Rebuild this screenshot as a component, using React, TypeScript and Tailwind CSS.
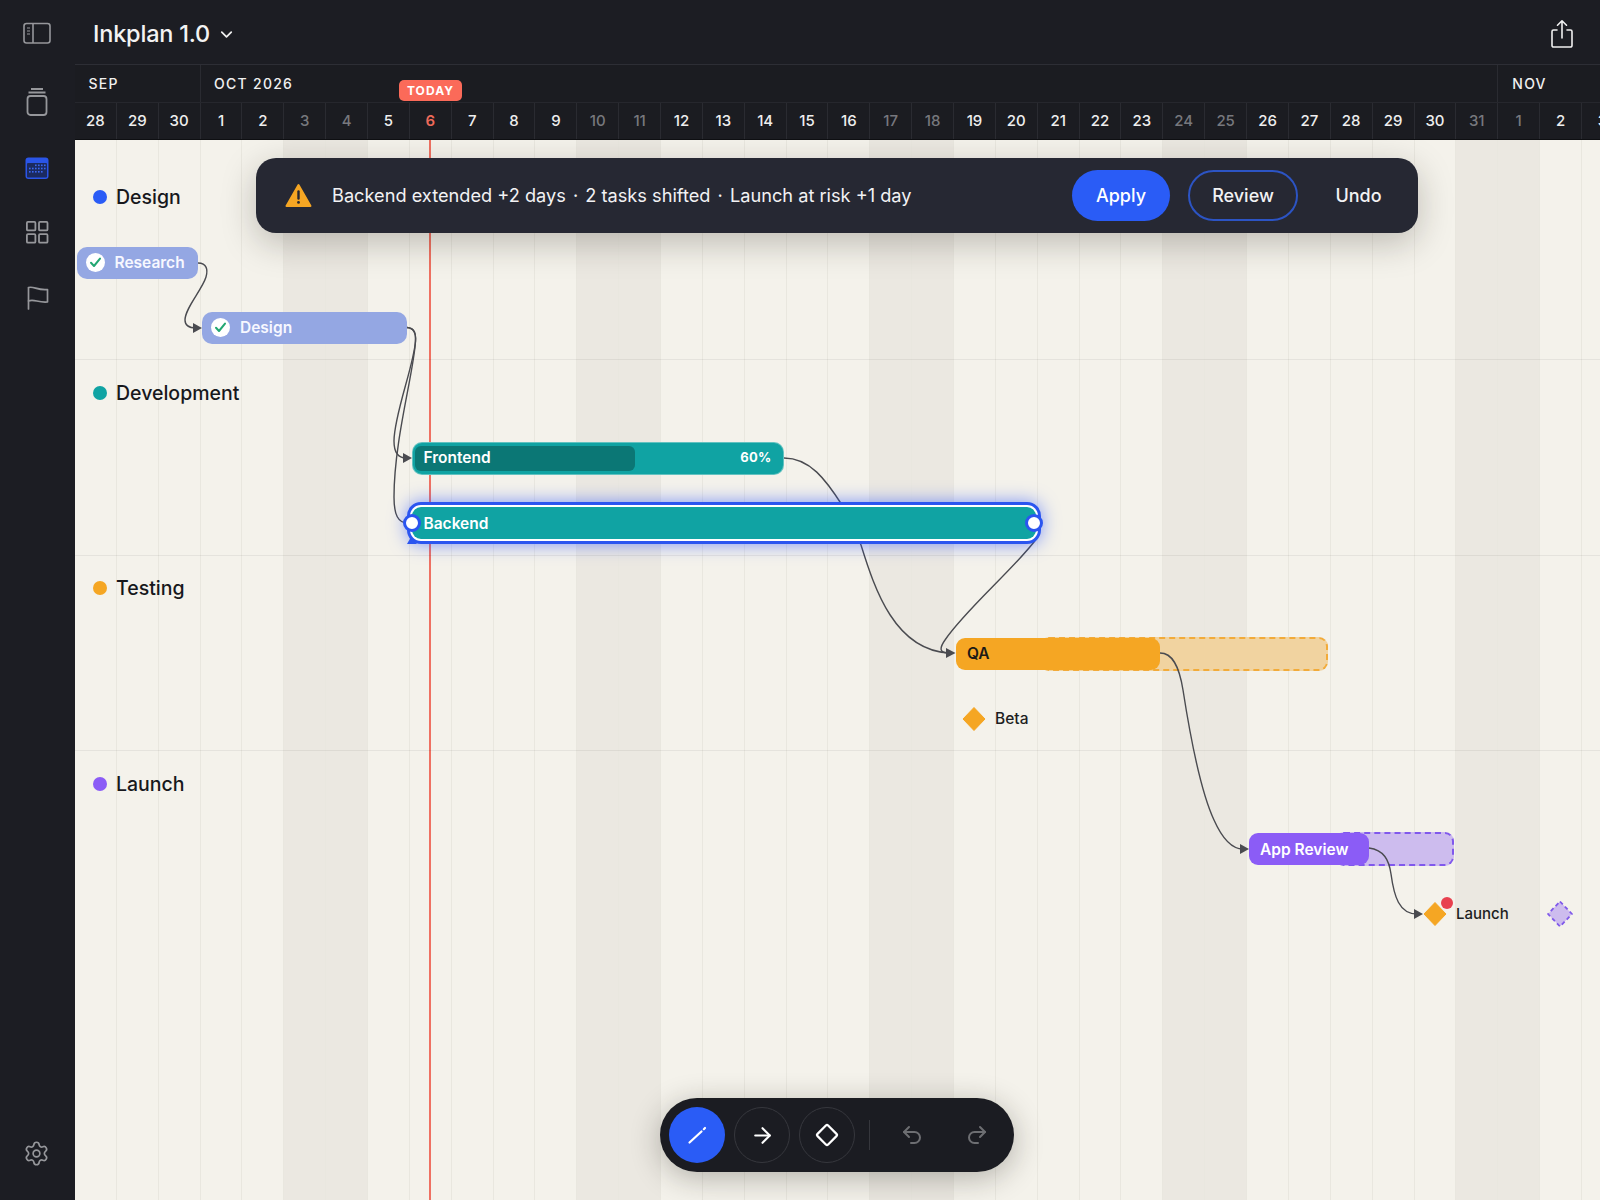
import React from "react";
import { Settings, ArrowRight, Undo2, Redo2, ChevronDown } from "lucide-react";

type Day = { n: number; kind: "work" | "off" | "today" };
const off = new Set(["o3","o4","o10","o11","o17","o18","o24","o25","o31","n1"]);
const days: (Day & { key: string })[] = [];
[28,29,30].forEach((n) => days.push({ n, kind: "work", key: "s" + n }));
for (let n = 1; n <= 31; n++) days.push({ n, kind: n === 6 ? "today" : off.has("o" + n) ? "off" : "work", key: "o" + n });
[1,2,3].forEach((n) => days.push({ n, kind: off.has("n" + n) ? "off" : "work", key: "n" + n }));

function Check() {
  return (
    <span className="w-[19px] h-[19px] rounded-full bg-white flex items-center justify-center shrink-0">
      <svg width="13" height="13" viewBox="0 0 13 13" fill="none"><path d="M2 6.8 L5 10 L11 2.6" stroke="#22a772" strokeWidth="2" strokeLinecap="round" strokeLinejoin="round" /></svg>
    </span>
  );
}

function Lane({ color, name, first, children }: { color: string; name: string; first?: boolean; children?: React.ReactNode }) {
  return (
    <div className={first ? "h-[220px] pt-[24.8px] border-b border-black/[0.06]" : "h-[195.6px] pt-[0.3px] border-b border-black/[0.06]"}>
      <div className="h-[65.2px] flex items-center pl-[18px] gap-[9px]">
        <span className="w-[14px] h-[14px] rounded-full" style={{ backgroundColor: color }} />
        <span className="text-[19.5px] leading-none font-medium text-[#17181c] pt-[1px]">{name}</span>
      </div>
      {children}
    </div>
  );
}

function Row({ children }: { children?: React.ReactNode }) {
  return <div className="h-[65.2px] flex items-center relative">{children}</div>;
}

export default function App() {
  return (
    <div className="w-[1600px] h-[1200px] flex overflow-hidden bg-[#1c1d23] font-['Inter',sans-serif]">
      <aside className="w-[75px] shrink-0 flex flex-col items-center pr-[1.5px] bg-[#1c1d23] relative z-10">
        <svg className="mt-[21px]" width="30" height="24" viewBox="0 0 30 24" fill="none" stroke="#96979b" strokeWidth="1.6">
          <rect x="2" y="2.5" width="26" height="19.5" rx="2.5" />
          <path d="M11 2.5V22" />
          <path d="M5 7H8M5 10H8M5 13H8" strokeWidth="1.2" />
        </svg>
        <svg className="mt-[42px]" width="24" height="30" viewBox="0 0 24 30" fill="none" stroke="#96979b" strokeWidth="1.8">
          <path d="M6 2H18M3.5 5.5H20.5" />
          <rect x="2.5" y="9" width="19" height="19" rx="3" />
        </svg>
        <svg className="mt-[40px]" width="24" height="22" viewBox="0 0 24 22">
          <rect x="0.5" y="0.5" width="23" height="21.5" rx="3" fill="#2a55e8" />
          <rect x="2" y="6" width="20" height="14.5" rx="1" fill="#1b2a60" />
          <g fill="#3a67f0">
            <rect x="10" y="7.5" width="1.6" height="1.6" /><rect x="13" y="7.5" width="1.6" height="1.6" /><rect x="16" y="7.5" width="1.6" height="1.6" /><rect x="19" y="7.5" width="1.6" height="1.6" />
            <rect x="4" y="10.7" width="1.6" height="1.6" /><rect x="7" y="10.7" width="1.6" height="1.6" /><rect x="10" y="10.7" width="1.6" height="1.6" /><rect x="13" y="10.7" width="1.6" height="1.6" /><rect x="16" y="10.7" width="1.6" height="1.6" /><rect x="19" y="10.7" width="1.6" height="1.6" />
            <rect x="4" y="14" width="1.6" height="1.6" /><rect x="7" y="14" width="1.6" height="1.6" /><rect x="10" y="14" width="1.6" height="1.6" /><rect x="13" y="14" width="1.6" height="1.6" /><rect x="16" y="14" width="1.6" height="1.6" />
          </g>
        </svg>
        <svg className="mt-[41px]" width="24" height="24" viewBox="0 0 24 24" fill="none" stroke="#96979b" strokeWidth="1.8">
          <rect x="1.9" y="1.9" width="8.5" height="8.5" rx="1" />
          <rect x="14" y="1.9" width="8.5" height="8.5" rx="1" />
          <rect x="1.9" y="14.2" width="8.5" height="8.5" rx="1" />
          <rect x="14" y="14.2" width="8.5" height="8.5" rx="1" />
        </svg>
        <svg className="mt-[41px]" width="24" height="26" viewBox="0 0 24 26" fill="none" stroke="#96979b" strokeWidth="1.7" strokeLinecap="round" strokeLinejoin="round">
          <path d="M3.5 24V3" />
          <path d="M3.5 2.5C9 1 12 5.5 22.5 4.5V17C13 18 9 13.5 3.5 16" />
        </svg>
        <div className="mt-auto mb-[33px]">
          <Settings size={27} strokeWidth={1.5} color="#96979b" />
        </div>
      </aside>

      <main className="flex-1 flex flex-col min-w-0">
        <header className="h-[65px] shrink-0 flex items-center border-b border-[#2d2e35] pt-[4px] pl-[18px] pr-[26px]">
          <span className="text-[23.5px] leading-none font-medium text-[#f3f3f3] tracking-[-0.2px]">Inkplan 1.0</span>
          <ChevronDown size={19} strokeWidth={2.2} color="#f0f0f0" className="ml-[7px]" />
          <svg className="ml-auto" width="24" height="30" viewBox="0 0 24 30" fill="none" stroke="#f0f0f0" strokeWidth="1.6" strokeLinecap="round" strokeLinejoin="round">
            <path d="M7 11H3.5A1.5 1.5 0 0 0 2 12.5V26.5A1.5 1.5 0 0 0 3.5 28H20.5A1.5 1.5 0 0 0 22 26.5V12.5A1.5 1.5 0 0 0 20.5 11H17" />
            <path d="M12 19V2M7.5 6.2L12 1.8L16.5 6.2" />
          </svg>
        </header>

        <div className="relative shrink-0 bg-[#1b1c21] text-[#f0f0f0] border-b border-[#0e0f12]">
          <div className="h-[38px] flex border-b border-[#26272d] text-[14px] font-medium tracking-[0.09em]">
            <div className="w-[124.6px] shrink-0 pl-[13.5px] flex items-center">SEP</div>
            <div className="w-[1297.7px] shrink-0 pl-[13.5px] flex items-center border-l border-[#2a2b31]">OCT 2026</div>
            <div className="flex-1 pl-[14px] flex items-center border-l border-[#2a2b31]">NOV</div>
          </div>
          <div className="h-[36px] flex overflow-hidden">
            {days.map((d) => (
              <div
                key={d.key}
                className={
                  "w-[41.86px] shrink-0 border-r border-[#2a2b31] flex items-center justify-center text-[15px] font-medium " +
                  (d.kind === "today" ? "text-[#ee6a5a] font-semibold" : d.kind === "off" ? "text-[#77787d]" : "text-[#eeeeee]")
                }
              >
                {d.n}
              </div>
            ))}
          </div>
          <div className="absolute left-[324px] top-[15px] w-[63px] h-[21px] rounded-[5px] bg-[#fb6a59] text-white text-[12px] font-bold tracking-[0.09em] flex items-center justify-center">
            TODAY
          </div>
        </div>

        <div className="relative flex-1 bg-[#f4f2eb] overflow-hidden">
          <div className="absolute inset-0 flex">
            {days.map((d) => (
              <div
                key={d.key}
                className={"w-[41.86px] shrink-0 border-r border-[#e9e7df] " + (d.kind === "off" ? "bg-[#ebe8e1]" : "")}
              />
            ))}
          </div>
          <div className="absolute left-[354px] top-0 bottom-0 w-[2px] bg-[#ef7162]" />

          <svg className="absolute inset-0 w-full h-full" viewBox="75 140 1525 1060" fill="none" stroke="#4a4b50" strokeWidth="1.4">
            <path d="M198 263C207 263 208 270 206 277C202 290 185 308 185 320C185 326 189 328 196 328" />
            <path d="M407 327.5C414 328 416 333 415.5 341C414 365 394 415 394 441C394 452 398 458 406 458" />
            <path d="M407 327.5C415 328 416 334 415.5 341C414 372 394 440 394 497C394 515 398 523 408 523" />
            <path d="M784 458C810 458 826 480 842 505C850 525 857 535 861 545C875 590 895 650 949 653" />
            <path d="M1037 538C1018 565 965 610 945 640C938 650 941 653 949 653" />
            <g fill="#4a4b50" stroke="none">
              <path d="M193 323L202 328L193 333Z" />
              <path d="M403 453L412 458L403 463Z" />
              <path d="M946 648L955.5 653L946 658Z" />
            </g>
          </svg>

          <div className="relative">
            <Lane color="#2a5cf6" name="Design" first>
              <Row>
                <div className="ml-[2px] w-[121px] h-[32px] rounded-[10px] bg-[#94a7e3] flex items-center pl-[9px] gap-[9.5px] text-[15.5px] font-semibold text-[#f7f8ff]">
                  <Check />Research
                </div>
              </Row>
              <Row>
                <div className="ml-[127px] w-[205px] h-[32px] rounded-[10px] bg-[#94a7e3] flex items-center pl-[9px] gap-[10px] text-[15.5px] font-semibold text-[#f7f8ff]">
                  <Check />Design
                </div>
              </Row>
            </Lane>
            <Lane color="#10a3a3" name="Development">
              <Row>
                <div className="ml-[336.5px] w-[372px] h-[33px] rounded-[10px] bg-[#10a3a3] relative flex items-center justify-between pl-[11px] pr-[11px] text-white border border-[#dff0ec]/40">
                  <div className="absolute left-[2px] top-[3px] bottom-[3px] w-[220px] rounded-[6px] bg-[#0b7775]" />
                  <span className="relative text-[15.5px] font-semibold">Frontend</span>
                  <span className="relative text-[13px] font-bold tracking-[0.02em]">60%</span>
                </div>
              </Row>
              <Row>
                <div className="ml-[332px] w-[633.5px] h-[42px] rounded-[14px] border-[3px] border-[#2b55f0] bg-white p-[2px] relative flex shadow-[0_0_18px_rgba(45,85,255,0.6)]">
                  <div className="flex-1 rounded-[9px] bg-[#10a3a3] flex items-center pl-[11.5px] text-[15.5px] font-semibold text-white">Backend</div>
                  <span className="absolute left-[-7px] top-[9px] w-[18px] h-[18px] rounded-full bg-white border-[3px] border-[#2b55f0]" />
                  <span className="absolute right-[-5px] top-[9px] w-[18px] h-[18px] rounded-full bg-white border-[3px] border-[#2b55f0]" />
                  <svg className="absolute left-[-3px] bottom-[-3px]" width="10" height="7" viewBox="0 0 10 7"><path d="M4 0L10 7H0Z" fill="#2b55f0" /></svg>
                </div>
              </Row>
            </Lane>
            <Lane color="#f5a623" name="Testing">
              <Row>
                <div className="absolute left-[965px] top-[15.5px] w-[288px] h-[34px] rounded-[9px] border-2 border-dashed border-[#f2ab3a] bg-[#f1d3a0]" />
                <div className="relative ml-[881px] w-[204px] h-[32px] rounded-[9px] bg-[#f5a623] flex items-center pl-[11px] text-[15.5px] font-semibold text-[#1c1a16]">QA</div>
              </Row>
              <Row>
                <svg className="ml-[887px]" width="24" height="26" viewBox="0 0 24 26"><path d="M12 1.5L23 13L12 24.5L1 13Z" fill="#f5a623" stroke="#f5a623" strokeLinejoin="round" /></svg>
                <span className="ml-[9px] text-[15.5px] font-medium text-[#1d1e22]">Beta</span>
              </Row>
            </Lane>
            <div className="pt-[0.3px]">
              <div className="h-[65.2px] flex items-center pl-[18px] gap-[9px]">
                <span className="w-[14px] h-[14px] rounded-full bg-[#8b5cf6]" />
                <span className="text-[19.5px] leading-none font-medium text-[#17181c] pt-[1px]">Launch</span>
              </div>
              <Row>
                <div className="absolute left-[1260px] top-[15.5px] w-[119px] h-[34px] rounded-[9px] border-2 border-dashed border-[#8058ec] bg-[#cdbcee]" />
                <div className="relative ml-[1174px] w-[120px] h-[32px] rounded-[9px] bg-[#8b5cf6] flex items-center pl-[11px] text-[15.5px] font-semibold text-white">App Review</div>
              </Row>
              <Row>
                <svg className="ml-[1348px]" width="24" height="26" viewBox="0 0 24 26"><path d="M12 1.5L23 13L12 24.5L1 13Z" fill="#f5a623" stroke="#f5a623" strokeLinejoin="round" /></svg>
                <span className="ml-[9px] text-[15px] font-medium text-[#1d1e22]">Launch</span>
                <span className="absolute left-[1365.5px] top-[15px] w-[12px] h-[12px] rounded-full bg-[#e8414f]" />
                <svg className="absolute left-[1471px] top-[18px]" width="28" height="28" viewBox="0 0 28 28"><path d="M14 1.5L26 14L14 26.5L2 14Z" fill="#cdbcee" stroke="#7f58ea" strokeWidth="1.8" strokeDasharray="4 3" strokeLinejoin="round" /></svg>
              </Row>
            </div>
          </div>

          <svg className="absolute inset-0 w-full h-full" viewBox="75 140 1525 1060" fill="none" stroke="#4a4b50" strokeWidth="1.4">
            <path d="M1160 653C1172 653 1179 665 1183 690C1190 735 1200 790 1214 820C1222 838 1232 849 1243 849" />
            <path d="M1369 848C1384 850 1389 860 1391 874C1394 896 1399 914 1417 914" />
            <g fill="#4a4b50" stroke="none">
              <path d="M1240 844L1249 849L1240 854Z" />
              <path d="M1414 909L1423 914L1414 919Z" />
            </g>
          </svg>

          <div className="absolute left-[181px] top-[18px] w-[1162px] h-[74.5px] rounded-[20px] bg-[#262833] flex items-center pl-[29px] pr-[9px] shadow-[0_10px_34px_rgba(30,28,20,0.25)]">
            <svg width="27" height="25" viewBox="0 0 27 25">
              <path d="M13.5 2L25.5 23H1.5Z" fill="#f5a623" stroke="#f5a623" strokeWidth="2" strokeLinejoin="round" />
              <path d="M13.5 8.5V15.5" stroke="#262833" strokeWidth="2.4" strokeLinecap="round" />
              <circle cx="13.5" cy="19.4" r="1.4" fill="#262833" />
            </svg>
            <span className="ml-[20px] text-[18.2px] text-[#f2f2f4] whitespace-pre">Backend extended +2 days <span className="mx-[2px]">·</span> 2 tasks shifted <span className="mx-[2px]">·</span> Launch at risk +1 day</span>
            <button className="ml-auto w-[98px] h-[51px] rounded-full bg-[#2a5cf6] text-[18px] font-medium text-white">Apply</button>
            <button className="ml-[18px] w-[110px] h-[51px] rounded-full border-2 border-[#2c54c4] text-[18px] font-medium text-[#f2f2f4]">Review</button>
            <button className="ml-[10px] w-[101px] h-[51px] text-[18px] font-medium text-[#f2f2f4]">Undo</button>
          </div>

          <div className="absolute left-[585px] bottom-[28px] w-[354px] h-[74px] rounded-full bg-[#1b1c22] flex items-center pl-[9px] shadow-[0_6px_30px_rgba(30,28,20,0.3)]">
            <div className="w-[56px] h-[56px] rounded-full bg-[#2a5cf6] flex items-center justify-center">
              <svg width="22" height="22" viewBox="0 0 22 22" fill="none" stroke="white" strokeLinecap="round">
                <path d="M3.5 18.5L15.5 7.5" strokeWidth="2.2" />
                <path d="M17.8 5.2L19 4" strokeWidth="2.2" />
              </svg>
            </div>
            <div className="ml-[9px] w-[56px] h-[56px] rounded-full border border-[#36373d] flex items-center justify-center">
              <ArrowRight size={25} strokeWidth={2} color="white" />
            </div>
            <div className="ml-[9px] w-[56px] h-[56px] rounded-full border border-[#36373d] flex items-center justify-center">
              <svg width="26" height="26" viewBox="0 0 26 26" fill="none" stroke="white" strokeWidth="2.2" strokeLinejoin="round">
                <rect x="5.5" y="5.5" width="15" height="15" rx="1.6" transform="rotate(45 13 13)" />
              </svg>
            </div>
            <div className="ml-[14px] w-px h-[30px] bg-[#36373d]" />
            <div className="ml-[14px] w-[56px] h-[56px] flex items-center justify-center">
              <Undo2 size={24} strokeWidth={2} color="#6d6e72" />
            </div>
            <div className="ml-[9px] w-[56px] h-[56px] flex items-center justify-center">
              <Redo2 size={24} strokeWidth={2} color="#6d6e72" />
            </div>
          </div>
        </div>
      </main>
    </div>
  );
}
